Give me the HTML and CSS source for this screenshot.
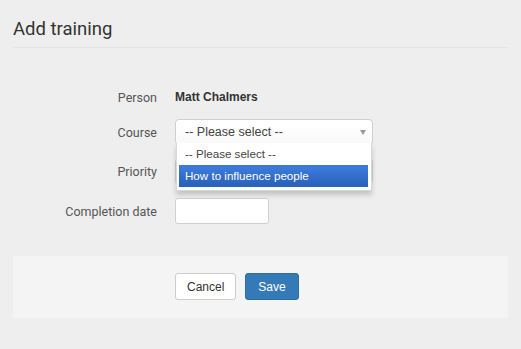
FILE: index.html
```html
<!DOCTYPE html>
<html lang="en">
<head>
    <meta charset="UTF-8">
    <title>Add training</title>
    <link rel="stylesheet" href="styles.css">
</head>
<body>
    <div class="page">
        <div class="page-header">
            <h1 class="title">Add training</h1>
        </div>

        <form class="training-form">
            <div class="form-row person">
                <label>Person</label>
                <div class="static-value">Matt Chalmers</div>
            </div>

            <div class="form-row course">
                <label>Course</label>
                <div class="chosen-container">
                    <div class="chosen-single">
                        <span>-- Please select --</span>
                        <b class="chosen-arrow"></b>
                    </div>
                    <div class="chosen-drop">
                        <ul class="chosen-results">
                            <li>-- Please select --</li>
                            <li class="highlighted">How to influence people</li>
                        </ul>
                    </div>
                </div>
            </div>

            <div class="form-row priority">
                <label>Priority</label>
                <div class="chosen-single priority-select"></div>
            </div>

            <div class="form-row completion">
                <label>Completion date</label>
                <input type="text" class="date-input">
            </div>
        </form>

        <div class="form-footer">
            <button class="btn btn-default" type="button">Cancel</button>
            <button class="btn btn-primary" type="button">Save</button>
        </div>
    </div>
</body>
</html>
```

FILE: styles.css
```css
body, html {
    margin: 0;
    padding: 0;
    width: 100%;
    height: 100%;
    background: #EEEEEE;
    font-family: 'Roboto', sans-serif;
}

.page {
    padding: 0 13px;
}

.page-header {
    padding-top: 17px;
    padding-bottom: 6px;
    border-bottom: 1px solid #E4E4E4;
}

.title {
    margin: 0;
    font-size: 18.5px;
    line-height: 24px;
    font-weight: 400;
    color: #333333;
}

.training-form {
    margin-top: 36px;
}

.form-row {
    display: grid;
    grid-template-columns: 144px 1fr;
    column-gap: 18px;
    align-items: center;
    height: 26px;
}

.form-row label {
    text-align: right;
    font-size: 12.5px;
    color: #555555;
}

.form-row.course {
    margin-top: 9px;
}

.form-row.priority {
    margin-top: 13px;
}

.form-row.completion {
    margin-top: 14px;
}

.static-value {
    font-family: 'Liberation Sans', Arial, sans-serif;
    font-weight: bold;
    font-size: 12px;
    color: #333333;
}

.chosen-container {
    position: relative;
    width: 198px;
    height: 26px;
    font-family: 'Liberation Sans', Arial, sans-serif;
}

.chosen-single {
    box-sizing: border-box;
    position: relative;
    width: 198px;
    height: 26px;
    padding: 0 9px;
    line-height: 24px;
    font-family: 'Liberation Sans', Arial, sans-serif;
    font-size: 12.5px;
    color: #444444;
    background: linear-gradient(#FFFFFF 20%, #FAFAFA 80%);
    border: 1px solid #D0D0D0;
    border-radius: 4px;
    box-shadow: 0 0 3px #FFFFFF inset, 0 1px 1px rgba(0, 0, 0, 0.06);
}

.chosen-arrow {
    position: absolute;
    right: 6px;
    top: 10px;
    width: 0;
    height: 0;
    border-left: 3px solid transparent;
    border-right: 3px solid transparent;
    border-top: 5px solid #9A9A9A;
}

.chosen-drop {
    position: absolute;
    z-index: 10;
    left: 1px;
    top: 24px;
    width: 196px;
    box-sizing: border-box;
    background: #FFFFFF;
    border: 1px solid #D8D8D8;
    border-top: 0;
    box-shadow: 0 4px 5px rgba(0, 0, 0, 0.18);
}

.chosen-results {
    list-style: none;
    margin: 0 3px 3px 0;
    padding: 0 0 0 2px;
}

.chosen-results li {
    padding: 4px 6px;
    line-height: 14px;
    font-size: 11.6px;
    color: #444444;
}

.chosen-results li.highlighted {
    color: #FFFFFF;
    background: linear-gradient(#3A78D9 20%, #2A62BC 90%);
}

.date-input {
    box-sizing: border-box;
    width: 94px;
    height: 26px;
    margin: 0;
    border: 1px solid #D0D0D0;
    border-radius: 3px;
    background: #FFFFFF;
}

.form-footer {
    display: flex;
    gap: 9px;
    margin-top: 32px;
    padding: 17px 0 18px 162px;
    background: #F4F4F4;
}

.btn {
    box-sizing: border-box;
    height: 27px;
    padding: 0 11px;
    font-family: 'Liberation Sans', Arial, sans-serif;
    font-size: 12px;
    border-radius: 3px;
    cursor: pointer;
}

.btn-default {
    background: #FFFFFF;
    border: 1px solid #CCCCCC;
    color: #333333;
}

.btn-primary {
    padding: 0 12px;
    background: #337AB7;
    border: 1px solid #2E6DA4;
    color: #FFFFFF;
}
```
